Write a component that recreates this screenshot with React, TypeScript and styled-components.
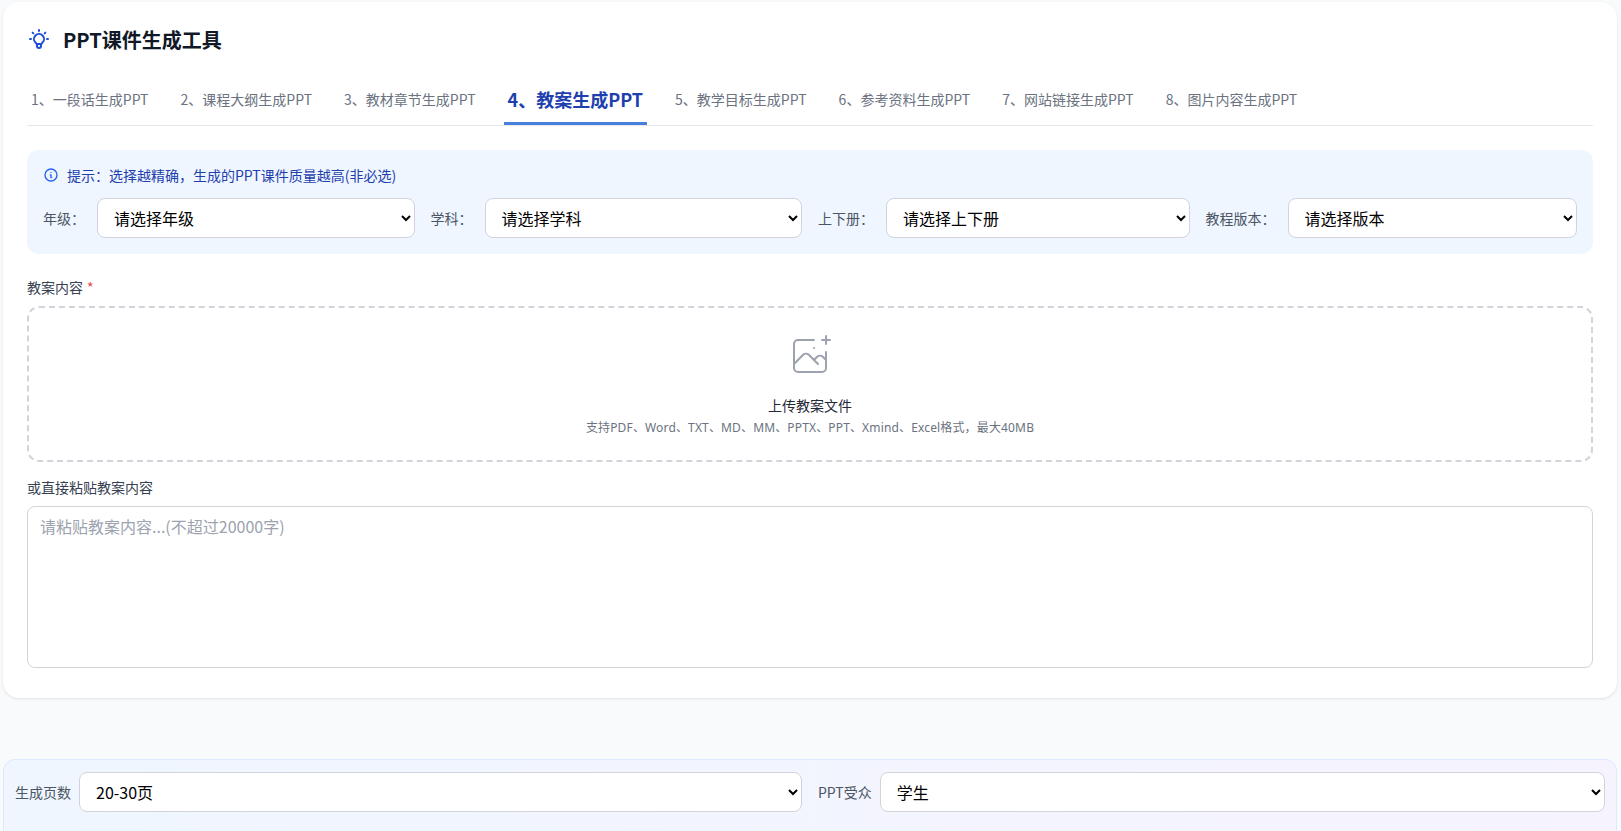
import React from "react";
import styled, { createGlobalStyle } from "styled-components";

const Global = createGlobalStyle`
  html, body { margin: 0; padding: 0; height: 100%; overflow: hidden; }
  body {
    background: #f9fafc;
    font-family: "Noto Sans CJK SC", "Noto Sans", sans-serif;
  }
  * { box-sizing: border-box; }
`;

const Page = styled.div`
  display: flex;
  flex-direction: column;
  padding: 2px 4px 0 3px;
  gap: 61px;
`;

const Card = styled.main`
  background: #fff;
  border-radius: 16px;
  box-shadow: 0 1px 3px rgba(0, 0, 0, 0.1);
  padding: 24px 24px 30px;
`;

const TitleRow = styled.header`
  display: flex;
  align-items: center;
  gap: 12px;
  height: 28px;
  margin: -1px 0 17px 0;
  color: #1d4ed8;
`;

const Title = styled.h1`
  margin: 0;
  font-size: 20px;
  font-weight: 700;
  color: #111827;
`;

const Tabs = styled.nav`
  display: flex;
  gap: 24px;
  height: 56px;
  border-bottom: 1px solid #e5e7eb;
  align-items: flex-end;
`;

const Tab = styled.div<{ $active?: boolean }>`
  padding: 0 4px 7px;
  height: 43px;
  display: flex;
  align-items: center;
  white-space: nowrap;
  font-size: ${(p) => (p.$active ? "18px" : "14px")};
  font-weight: ${(p) => (p.$active ? 700 : 400)};
  color: ${(p) => (p.$active ? "#1e40af" : "#6b7280")};
  border-bottom: 3px solid ${(p) => (p.$active ? "#4680dc" : "transparent")};
`;

const Hint = styled.section`
  margin-top: 24px;
  background: #eff6ff;
  border-radius: 12px;
  padding: 15px 16px 16px;
  height: 104px;
`;

const HintLine = styled.div`
  display: flex;
  align-items: center;
  gap: 8px;
  font-size: 14px;
  line-height: 20px;
  color: #1e40af;
  margin-bottom: 13px;
  svg { color: #2563eb; }
`;

const FilterRow = styled.div`
  display: flex;
  gap: 16px;
`;

const Field = styled.label<{ $gap?: number }>`
  flex: 1 1 0;
  min-width: 0;
  display: flex;
  align-items: center;
  gap: ${(p) => p.$gap ?? 12}px;
`;

const FieldLabel = styled.span`
  font-size: 14px;
  white-space: nowrap;
  color: #4b5563;
`;

const Select = styled.select`
  flex: 1;
  min-width: 0;
  height: 40px;
  padding: 0 12px;
  font-size: 16px;
  font-family: inherit;
  color: #000;
  background: #fff;
  border: 1px solid #d1d5db;
  border-radius: 8px;
  outline: none;
`;

const SectionLabel = styled.div<{ $top: number; $bottom: number }>`
  font-size: 14px;
  line-height: 20px;
  color: #374151;
  margin-top: ${(p) => p.$top}px;
  margin-bottom: ${(p) => p.$bottom}px;
`;

const Star = styled.span`
  color: #ef4444;
  margin-left: 4px;
`;

const Upload = styled.div`
  display: flex;
  flex-direction: column;
  align-items: center;
  height: 156px;
  padding-top: 24px;
  border: 2px dashed #d1d5db;
  border-radius: 12px;
  color: #9ca3af;
`;

const UploadTitle = styled.div`
  margin-top: 15px;
  font-size: 14px;
  line-height: 20px;
  color: #1f2937;
`;

const UploadSub = styled.div`
  margin-top: 5px;
  font-size: 12px;
  line-height: 16px;
  letter-spacing: 0.15px;
  font-family: "Noto Sans", "Noto Sans CJK SC", sans-serif;
  color: #6b7280;
`;

const Textarea = styled.textarea`
  display: block;
  width: 100%;
  height: 162px;
  padding: 7px 12px 9px;
  resize: none;
  font-size: 16px;
  line-height: 24px;
  font-family: inherit;
  border: 1px solid #d1d5db;
  border-radius: 8px;
  outline: none;
  &::placeholder { color: #9ca3af; }
`;

const Bar = styled.footer`
  display: flex;
  gap: 16px;
  padding: 12px 11px 40px;
  border: 1px solid #dbeafe;
  border-radius: 12px;
  background: linear-gradient(90deg, #eff6ff, #f6f3fe);
`;

const tabs = [
  "1、一段话生成PPT",
  "2、课程大纲生成PPT",
  "3、教材章节生成PPT",
  "4、教案生成PPT",
  "5、教学目标生成PPT",
  "6、参考资料生成PPT",
  "7、网站链接生成PPT",
  "8、图片内容生成PPT",
];

const filters = [
  ["年级：", "请选择年级"],
  ["学科：", "请选择学科"],
  ["上下册：", "请选择上下册"],
  ["教程版本：", "请选择版本"],
];

const Bulb = () => (
  <svg width="24" height="24" viewBox="0 0 24 24" fill="none" stroke="currentColor" strokeWidth="2" strokeLinecap="round" strokeLinejoin="round">
    <path d="M9.663 17h4.673M12 3v1m6.364 1.636l-.707.707M21 12h-1M4 12H3m3.343-5.657l-.707-.707m2.828 9.9a5 5 0 117.072 0l-.548.547A3.374 3.374 0 0014 18.469V19a2 2 0 11-4 0v-.531c0-.895-.356-1.754-.988-2.386l-.548-.547z" />
  </svg>
);

const Info = () => (
  <svg width="16" height="16" viewBox="0 0 24 24" fill="none" stroke="currentColor" strokeWidth="2" strokeLinecap="round" strokeLinejoin="round">
    <path d="M13 16h-1v-4h-1m1-4h.01M21 12a9 9 0 11-18 0 9 9 0 0118 0z" />
  </svg>
);

const ImagePlus = () => (
  <svg width="48" height="48" viewBox="0 0 48 48" fill="none" stroke="currentColor" strokeWidth="2" strokeLinecap="round" strokeLinejoin="round">
    <path d="M28 8H12a4 4 0 00-4 4v20m32-12v8m0 0v8a4 4 0 01-4 4H12a4 4 0 01-4-4v-4m32-4l-3.172-3.172a4 4 0 00-5.656 0L28 28M8 32l9.172-9.172a4 4 0 015.656 0L28 28m0 0l4 4m4-24h8m-4-4v8m-12 4h.02" />
  </svg>
);

export default function App() {
  return (
    <>
      <Global />
      <Page>
        <Card>
          <TitleRow>
            <Bulb />
            <Title>PPT课件生成工具</Title>
          </TitleRow>
          <Tabs>
            {tabs.map((t, i) => (
              <Tab key={t} $active={i === 3}>{t}</Tab>
            ))}
          </Tabs>
          <Hint>
            <HintLine>
              <Info />
              提示：选择越精确，生成的PPT课件质量越高(非必选)
            </HintLine>
            <FilterRow>
              {filters.map(([l, v]) => (
                <Field key={l}>
                  <FieldLabel>{l}</FieldLabel>
                  <Select defaultValue={v}>
                    <option>{v}</option>
                  </Select>
                </Field>
              ))}
            </FilterRow>
          </Hint>
          <SectionLabel $top={23} $bottom={9}>
            教案内容<Star>*</Star>
          </SectionLabel>
          <Upload>
            <ImagePlus />
            <UploadTitle>上传教案文件</UploadTitle>
            <UploadSub>支持PDF、Word、TXT、MD、MM、PPTX、PPT、Xmind、Excel格式，最大40MB</UploadSub>
          </Upload>
          <SectionLabel $top={15} $bottom={9}>或直接粘贴教案内容</SectionLabel>
          <Textarea placeholder="请粘贴教案内容...(不超过20000字)" />
        </Card>
        <Bar>
          <Field $gap={8}>
            <FieldLabel>生成页数</FieldLabel>
            <Select defaultValue="20-30页"><option>20-30页</option></Select>
          </Field>
          <Field $gap={8}>
            <FieldLabel>PPT受众</FieldLabel>
            <Select defaultValue="学生"><option>学生</option></Select>
          </Field>
        </Bar>
      </Page>
    </>
  );
}
